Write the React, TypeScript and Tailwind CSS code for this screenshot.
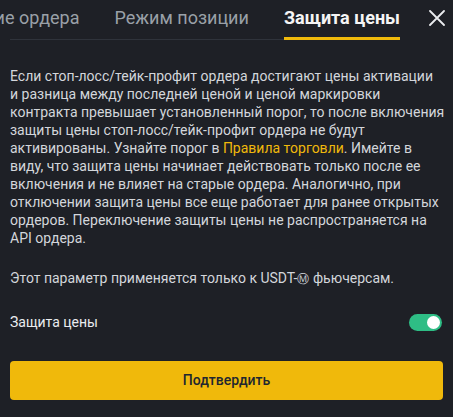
const tabs = ['Подтверждение ордера', 'Режим позиции', 'Защита цены'];

const lines = [
  'Если стоп-лосс/тейк-профит ордера достигают цены активации',
  'и разница между последней ценой и ценой маркировки',
  'контракта превышает установленный порог, то после включения',
  'защиты цены стоп-лосс/тейк-профит ордера не будут',
];

const lines2 = [
  'виду, что защита цены начинает действовать только после ее',
  'включения и не влияет на старые ордера. Аналогично, при',
  'отключении защита цены все еще работает для ранее открытых',
  'ордеров. Переключение защиты цены не распространяется на',
  'API ордера.',
];

export default function App() {
  return (
    <div className="h-[417px] w-[453px] overflow-hidden bg-[#1e2026] font-['Roboto',sans-serif] text-[#eaecef]">
      {/* Tabs */}
      <div className="flex h-[41px] items-start">
        <div className="relative flex h-[41px] w-[400px] justify-end overflow-hidden">
          <div className="absolute bottom-[1px] left-[10px] right-0 h-px bg-[#2f333b]" />
          <div className="flex shrink-0 gap-[35px]">
            {tabs.map((t, i) => {
              const active = i === tabs.length - 1;
              return (
                <div
                  key={t}
                  className={`relative shrink-0 whitespace-nowrap pt-[6px] text-[18px] leading-[24px] ${
                    active ? 'font-bold text-[#f5f5f5]' : 'text-[#9aa0a8]'
                  }`}
                >
                  {t}
                  {active && <div className="absolute left-0 right-0 top-[37px] h-[3px] bg-[#f0b90b]" />}
                </div>
              );
            })}
          </div>
        </div>
        <button className="ml-auto mr-[8px] mt-[10px] text-[#eaecef]">
          <svg width="16" height="16" viewBox="0 0 16 16" fill="none" stroke="currentColor" strokeWidth="1.8" strokeLinecap="round">
            <path d="M1 1L15 15M15 1L1 15" />
          </svg>
        </button>
      </div>

      {/* Body */}
      <div className="px-[10px] pt-[26px]">
        <p className="whitespace-nowrap text-[14px] leading-[18px] text-[#d3d6db]">
          {lines.map((l) => (
            <span key={l} className="block">
              {l}
            </span>
          ))}
          <span className="block">
            активированы. Узнайте порог в <span className="text-[#f0b90b]">Правила торговли</span>. Имейте в
          </span>
          {lines2.map((l) => (
            <span key={l} className="block">
              {l}
            </span>
          ))}
        </p>
        <p className="mt-[22px] text-[14px] leading-[18px] text-[#d3d6db]">
          Этот параметр применяется только к USDT-<span className="text-[12px]">Ⓜ</span> фьючерсам.
        </p>

        <div className="mt-[22px] flex h-[24px] items-center justify-between">
          <span className="text-[14px] text-[#eaecef]">Защита цены</span>
          <div className="mr-[1px] flex h-[17px] w-[33px] items-center justify-end rounded-full bg-[#2ebd85] px-[2px]">
            <div className="h-[13px] w-[13px] rounded-full bg-white" />
          </div>
        </div>

        <button className="mt-[27px] flex h-[39px] w-full items-center justify-center rounded-[4px] bg-[#f0b90b] text-[14px] font-medium text-[#202630]">
          Подтвердить
        </button>
      </div>
    </div>
  );
}
